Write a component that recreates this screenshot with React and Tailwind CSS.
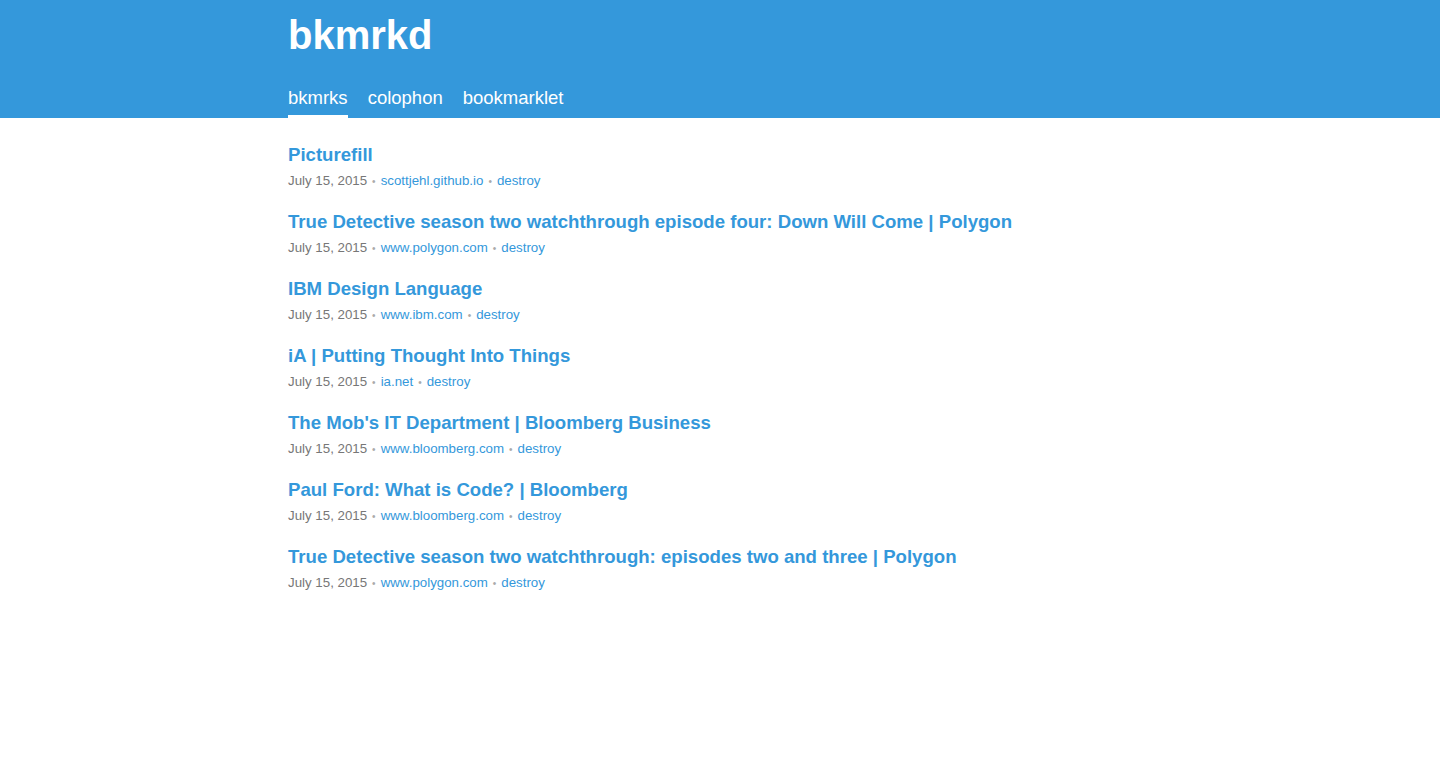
const bookmarks = [
  { title: 'Picturefill', host: 'scottjehl.github.io' },
  { title: 'True Detective season two watchthrough episode four: Down Will Come | Polygon', host: 'www.polygon.com' },
  { title: 'IBM Design Language', host: 'www.ibm.com' },
  { title: 'iA | Putting Thought Into Things', host: 'ia.net' },
  { title: "The Mob's IT Department | Bloomberg Business", host: 'www.bloomberg.com' },
  { title: 'Paul Ford: What is Code? | Bloomberg', host: 'www.bloomberg.com' },
  { title: 'True Detective season two watchthrough: episodes two and three | Polygon', host: 'www.polygon.com' },
];

const Dot = () => <span className="mx-[5px] text-[10px] leading-none text-[#aaa]">•</span>;

export default function App() {
  return (
    <div className="min-h-[778px] bg-white font-['Liberation_Sans',Arial,sans-serif]">
      {/* Header */}
      <header className="bg-[#3498db] text-white">
        <div className="w-[864px] mx-auto">
          <h1 className="pt-[9px] text-[40px] leading-[52px] font-bold">bkmrkd</h1>
          <nav className="flex gap-5 mt-[26px] text-[18.5px] leading-[22px]">
            <a className="pb-[6px] border-b-[3px] border-white">bkmrks</a>
            <a className="pb-[6px] border-b-[3px] border-transparent">colophon</a>
            <a className="pb-[6px] border-b-[3px] border-transparent">bookmarklet</a>
          </nav>
        </div>
      </header>

      {/* List */}
      <main className="w-[864px] mx-auto pt-[25px]">
        <ul className="flex flex-col gap-[19px]">
          {bookmarks.map((b, i) => (
            <li key={i}>
              <a className="block text-[#3498db] text-[18.6px] leading-[24px] font-bold">{b.title}</a>
              <div className="mt-[3px] text-[13.3px] leading-[21px] text-[#777]">
                July 15, 2015
                <Dot />
                <a className="text-[#3498db]">{b.host}</a>
                <Dot />
                <a className="text-[#3498db]">destroy</a>
              </div>
            </li>
          ))}
        </ul>
      </main>
    </div>
  );
}
